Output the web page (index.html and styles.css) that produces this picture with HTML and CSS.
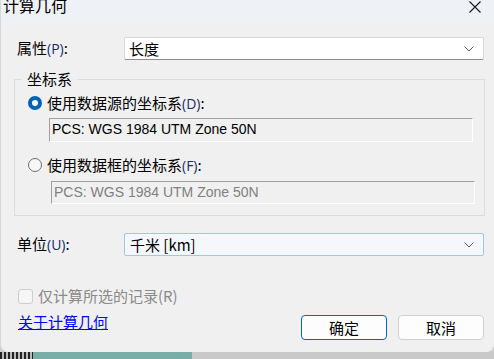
FILE: index.html
```html
<!DOCTYPE html>
<html lang="zh-CN">
<head>
<meta charset="utf-8">
<title>计算几何</title>
<link rel="stylesheet" href="styles.css">
</head>
<body>
<div class="desktop">
  <div class="window">
    <div class="titlebar">
      <span class="title">计算几何</span>
      <svg class="close" width="12" height="12" viewBox="0 0 12 12"><path d="M0.5 0.5 L11.5 11.5 M11.5 0.5 L0.5 11.5" stroke="#1a1a1a" stroke-width="1.1" fill="none"/></svg>
    </div>
    <div class="content">
      <div class="row row-prop">
        <span class="label">属性<span class="paren">(P)</span>:</span>
        <div class="combo">
          <span class="combo-text">长度</span>
          <svg class="chev" width="10" height="6" viewBox="0 0 10 6"><path d="M0.5 0.5 L5 5 L9.5 0.5" stroke="#5a5a5a" stroke-width="1" fill="none"/></svg>
        </div>
      </div>
      <fieldset class="group">
        <legend>坐标系</legend>
        <div class="radio-row first">
          <span class="radio checked"></span>
          <span class="radio-label">使用数据源的坐标系<span class="paren">(D)</span>:</span>
        </div>
        <div class="field field1">PCS: WGS 1984 UTM Zone 50N</div>
        <div class="radio-row second">
          <span class="radio"></span>
          <span class="radio-label">使用数据框的坐标系<span class="paren">(F)</span>:</span>
        </div>
        <div class="field field2 disabled">PCS: WGS 1984 UTM Zone 50N</div>
      </fieldset>
      <div class="row row-unit">
        <span class="label">单位<span class="paren">(U)</span>:</span>
        <div class="combo combo-hover">
          <span class="combo-text">千米 [km]</span>
          <svg class="chev" width="10" height="6" viewBox="0 0 10 6"><path d="M0.5 0.5 L5 5 L9.5 0.5" stroke="#5a5a5a" stroke-width="1" fill="none"/></svg>
        </div>
      </div>
      <div class="check-row">
        <span class="checkbox"></span>
        <span class="check-label">仅计算所选的记录(R)</span>
      </div>
      <div class="footer">
        <a class="link" href="#">关于计算几何</a>
        <div class="buttons">
          <button class="btn primary">确定</button>
          <button class="btn">取消</button>
        </div>
      </div>
    </div>
  </div>
  <div class="strip">
    <span class="strip-dash"></span>
    <span class="strip-teal"></span>
    <span class="strip-gray"></span>
  </div>
</div>
</body>
</html>
```

FILE: styles.css
```css
html, body {
  margin: 0;
  padding: 0;
}
body {
  width: 494px;
  height: 359px;
  overflow: hidden;
  font-family: "Noto Sans CJK SC", "Noto Sans", sans-serif;
  font-size: 15px;
  color: #000;
  background: #cfcfcf;
}
.desktop {
  display: flex;
  flex-direction: column;
  height: 359px;
}
.window {
  height: 352px;
  background: #f0f0f0;
  border-radius: 0 0 8px 8px;
  border-left: 1px solid #d8d8d8;
  box-sizing: border-box;
  display: flex;
  flex-direction: column;
  overflow: hidden;
}
.titlebar {
  height: 23px;
  background: #eef2f7;
  display: flex;
  justify-content: space-between;
  align-items: flex-start;
  overflow: hidden;
}
.title {
  font-size: 16px;
  line-height: 16px;
  margin-top: -3px;
  margin-left: 2px;
  color: #000;
}
.close {
  margin-top: 1px;
  margin-right: 13px;
}
.content {
  padding: 14px 0 0 16px;
  display: flex;
  flex-direction: column;
}
.row {
  display: flex;
  align-items: center;
  height: 23px;
}
.label {
  width: 107px;
  line-height: 20px;
}
.paren {
  font-family: "Open Sans", "Noto Sans", sans-serif;
  font-size: 14px;
  color: #1a2a6a;
}
.combo {
  width: 360px;
  height: 23px;
  box-sizing: border-box;
  background: #fff;
  border: 1px solid #d6d6d6;
  border-bottom-color: #8d8d8d;
  border-radius: 2px;
  display: flex;
  align-items: center;
  justify-content: space-between;
  padding: 0 9px 0 4px;
}
.combo-text {
  line-height: 20px;
}
.combo-hover {
  background: #f4f8fc;
  border-color: #a7c4e2;
}
.group {
  margin: 10px 0 0 -3px;
  width: 471px;
  height: 146px;
  box-sizing: border-box;
  border: 1px solid #dcdcdc;
  padding: 0;
  min-width: 0;
}
.group legend {
  margin-left: 7px;
  padding: 0 5px;
  line-height: 18px;
}
.radio-row {
  display: flex;
  align-items: center;
  height: 20px;
  padding-left: 13px;
}
.radio-row.first {
  margin-top: 5px;
}
.radio-row.second {
  margin-top: 13px;
}
.radio {
  width: 14px;
  height: 14px;
  box-sizing: border-box;
  border-radius: 50%;
  border: 1px solid #6d6d6d;
  background: #f7f7f7;
  margin-right: 5px;
  flex: none;
}
.radio.checked {
  border: 4px solid #0062b8;
  background: #fff;
}
.radio-label {
  line-height: 20px;
}
.field {
  margin-top: 5px;
  margin-left: 34px;
  width: 424px;
  height: 24px;
  box-sizing: border-box;
  border-top: 1px solid #a0a0a0;
  border-left: 1px solid #a0a0a0;
  border-right: 1px solid #fff;
  border-bottom: 1px solid #fff;
  font-family: "Liberation Sans", Arial, sans-serif;
  font-size: 14px;
  line-height: 21px;
  padding-left: 2px;
  color: #000;
}
.field2 {
  margin-top: 6px;
  margin-left: 36px;
  height: 23px;
  line-height: 20px;
}
.field.disabled {
  color: #808080;
}
.row-unit {
  margin-top: 17px;
}
.row-unit .combo-text {
  padding-left: 1px;
}
.check-row {
  display: flex;
  align-items: center;
  margin-top: 32px;
  height: 16px;
  padding-left: 1px;
}
.checkbox {
  width: 15px;
  height: 15px;
  box-sizing: border-box;
  border: 1px solid #cdcdcd;
  border-radius: 3px;
  background: #f6f6f6;
  margin-right: 5px;
}
.check-label {
  color: #8a8a8a;
  line-height: 20px;
}
.footer {
  display: flex;
  justify-content: space-between;
  align-items: flex-start;
  margin-top: 11px;
  width: 467px;
}
.link {
  color: #0000ff;
  text-decoration: underline;
  line-height: 16px;
  margin-left: 1px;
  margin-top: -1px;
}
.buttons {
  display: flex;
  gap: 11px;
}
.btn {
  width: 86px;
  height: 25px;
  box-sizing: border-box;
  background: #fdfdfd;
  border: 1px solid #d0d0d0;
  border-radius: 4px;
  font-family: "Noto Sans CJK SC", sans-serif;
  font-size: 15px;
  color: #000;
  padding: 0;
  line-height: 21px;
}
.btn.primary {
  border-color: #0067c0;
}
.strip {
  flex: 1;
  display: flex;
  align-items: stretch;
}
.strip-dash {
  width: 33px;
  background: repeating-linear-gradient(90deg, #222 0 2px, #bbb 2px 4px);
}
.strip-teal {
  width: 159px;
  background: #79aea8;
}
.strip-gray {
  flex: 1;
  background: #c9c9c9;
}
```
